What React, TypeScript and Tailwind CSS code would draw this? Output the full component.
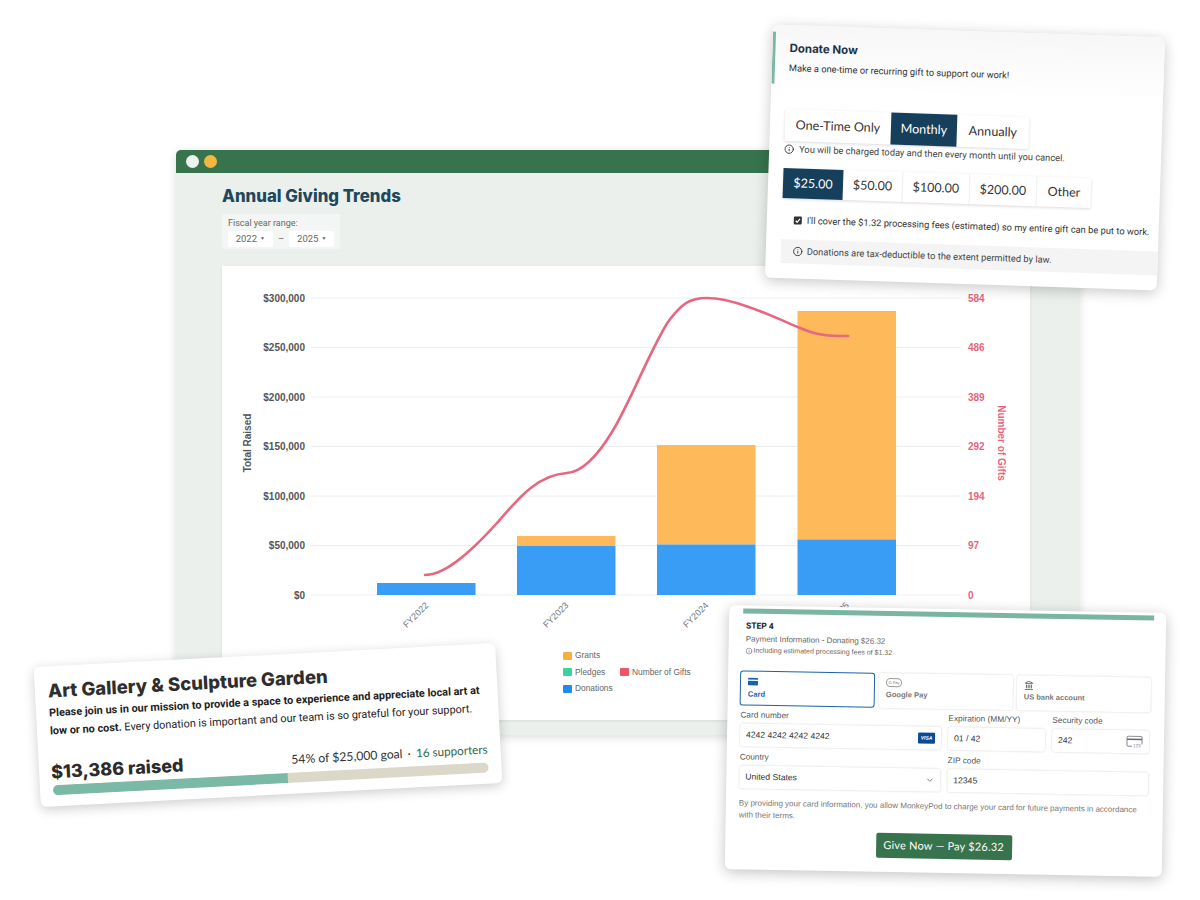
import { ChevronDown, Info, Landmark } from 'lucide-react'

const GRID = [298, 347.5, 397, 446.5, 496, 545.5, 595]
const LEFT_TICKS = ['$300,000', '$250,000', '$200,000', '$150,000', '$100,000', '$50,000', '$0']
const RIGHT_TICKS = ['584', '486', '389', '292', '194', '97', '0']

const BARS = [
  { x: 377, label: 'FY2022', blue: 583, orange: 583 },
  { x: 517, label: 'FY2023', blue: 546, orange: 536 },
  { x: 657, label: 'FY2024', blue: 544.5, orange: 445 },
  { x: 797.5, label: 'FY2025', blue: 539.5, orange: 311 },
]

const GIFTS_LINE =
  'M425 575 C445 575 470 553 497 523 C515 503 535 475 567 473 C582 472 598 455 612 432 ' +
  'C630 403 650 350 668 322 C682 303 690 298 707 298 C735 298 775 317.5 800 328 C820 336.5 832 336 848 336'

function Chart() {
  return (
    <svg width="808" height="374" viewBox="222 266 808 374" className="block" fontFamily="'Liberation Sans', Arial, sans-serif">
      {GRID.map((y, i) => (
        <g key={y}>
          <line x1="311" x2="961" y1={y} y2={y} stroke="#eceeed" strokeWidth="1" />
          <text x="305" y={y + 3.5} textAnchor="end" fontSize="10" fontWeight="700" fill="#555">{LEFT_TICKS[i]}</text>
          <text x="968" y={y + 3.5} fontSize="10" fontWeight="700" fill="#e8647c">{RIGHT_TICKS[i]}</text>
        </g>
      ))}
      <text transform="translate(251 443) rotate(-90)" textAnchor="middle" fontSize="10" fontWeight="700" fill="#555">Total Raised</text>
      <text transform="translate(998 443) rotate(90)" textAnchor="middle" fontSize="10" fontWeight="700" fill="#e8647c">Number of Gifts</text>
      {BARS.map(b => (
        <g key={b.label}>
          <rect x={b.x} y={b.orange} width="98.5" height={b.blue - b.orange} fill="#fdb95a" />
          <rect x={b.x} y={b.blue} width="98.5" height={595 - b.blue} fill="#399df5" />
          <text transform={`translate(${b.x + 52} 606) rotate(-45)`} textAnchor="end" fontSize="9" fill="#777">{b.label}</text>
        </g>
      ))}
      <path d={GIFTS_LINE} fill="none" stroke="#e6677f" strokeWidth="2.6" strokeLinecap="round" />
    </svg>
  )
}

function LegendItem({ color, label }: { color: string; label: string }) {
  return (
    <div className="flex items-center gap-[3px] font-['Liberation_Sans',Arial,sans-serif] text-[8.4px] leading-[9px] text-[#666]">
      <span className={`h-[8px] w-[9px] rounded-[1px] ${color}`} />
      {label}
    </div>
  )
}

function BrowserWindow() {
  return (
    <div className="absolute left-[176px] top-[150px] h-[585px] w-[903px] overflow-hidden rounded-t-[5px] bg-[#ebf0ed] shadow-[0_2px_10px_rgba(0,0,0,0.14)]">
      <div className="flex h-[23px] items-center gap-[5px] bg-[#37734d] pl-[10px]">
        <span className="h-[13px] w-[13px] rounded-full bg-[#edf3ee]" />
        <span className="h-[13px] w-[13px] rounded-full bg-[#f4b73f]" />
      </div>
      <div className="px-[46px]">
        <h1 className="mt-[12px] font-['Inter',sans-serif] text-[16.8px] font-extrabold leading-[22px] text-[#21475c]">Annual Giving Trends</h1>
        <div className="mt-[7px] h-[35px] w-[118px] rounded-[2px] bg-[#f3f6f4] px-[6px] pt-[4px] font-['Roboto',sans-serif] text-[#666]">
          <p className="text-[9px] leading-[11px]">Fiscal year range:</p>
          <div className="mt-[2px] flex items-center text-[9.5px]">
            <span className="flex h-[16px] w-[45px] items-center justify-center gap-[3px] rounded-[2px] bg-white">2022 <span className="text-[5px]">▼</span></span>
            <span className="w-[17px] text-center">–</span>
            <span className="flex h-[16px] w-[45px] items-center justify-center gap-[3px] rounded-[2px] bg-white">2025 <span className="text-[5px]">▼</span></span>
          </div>
        </div>
        <div className="mt-[17px] h-[454px] w-[808px] bg-white shadow-[0_1px_3px_rgba(0,0,0,0.08)]">
          <Chart />
          <div className="ml-[341px] mt-[11px] grid w-[140px] grid-cols-[57px_1fr] gap-y-[7.5px]">
            <LegendItem color="bg-[#f5b041]" label="Grants" />
            <span />
            <LegendItem color="bg-[#3ad29f]" label="Pledges" />
            <LegendItem color="bg-[#f25369]" label="Number of Gifts" />
            <LegendItem color="bg-[#1f8ceb]" label="Donations" />
          </div>
        </div>
      </div>
    </div>
  )
}

function DonateCard() {
  return (
    <div className="absolute left-[769px] top-[31px] h-[253px] w-[392px] rotate-[1.9deg] overflow-hidden rounded-[6px] bg-white font-['Roboto',sans-serif] shadow-[0_3px_14px_rgba(0,0,0,0.22)]">
      <div className="h-[68px] bg-gradient-to-b from-[#f7f7f7] to-white pt-[7px]">
        <div className="h-[52px] border-l-[3px] border-[#7ab8a3] pl-[14px] pt-[8px]">
          <p className="font-['Inter',sans-serif] text-[11.5px] font-bold leading-[16px] text-[#1c3347]">Donate Now</p>
          <p className="mt-[6px] text-[9.3px] leading-[12px] text-[#333]">Make a one-time or recurring gift to support our work!</p>
        </div>
      </div>
      <div className="ml-[15px] mt-[16px] flex h-[32px] w-fit rounded-[2px] font-['Lato',sans-serif] text-[12.6px] text-[#333] shadow-[0_1px_3px_rgba(0,0,0,0.15)]">
        <span className="flex w-[106px] items-center justify-center">One-Time Only</span>
        <span className="flex w-[66px] items-center justify-center bg-[#163f5c] text-white">Monthly</span>
        <span className="flex w-[72px] items-center justify-center">Annually</span>
      </div>
      <p className="ml-[15px] mt-[2px] flex items-center gap-[5px] text-[9.3px] leading-[12px] text-[#444]">
        <Info size={10} strokeWidth={2} className="text-[#222]" />
        You will be charged today and then every month until you cancel.
      </p>
      <div className="ml-[15px] mt-[13px] flex h-[30px] w-fit rounded-[2px] font-['Lato',sans-serif] text-[12.5px] text-[#333] shadow-[0_1px_3px_rgba(0,0,0,0.15)]">
        <span className="flex w-[60px] items-center justify-center bg-[#163f5c] text-white">$25.00</span>
        <span className="flex w-[60px] items-center justify-center border-r border-[#eee]">$50.00</span>
        <span className="flex w-[67px] items-center justify-center border-r border-[#eee]">$100.00</span>
        <span className="flex w-[67px] items-center justify-center border-r border-[#eee]">$200.00</span>
        <span className="flex w-[54px] items-center justify-center">Other</span>
      </div>
      <div className="ml-[27px] mt-[16px] flex items-center gap-[5px] text-[9.3px] leading-[12px] text-[#333]">
        <span className="flex h-[8px] w-[8px] items-center justify-center rounded-[1px] bg-[#333]">
          <svg width="6" height="6" viewBox="0 0 10 10" fill="none" stroke="#fff" strokeWidth="2"><path d="M1.5 5.5 4 8l4.5-6" /></svg>
        </span>
        <span className="whitespace-nowrap">I'll cover the $1.32 processing fees (estimated) so my entire gift can be put to work.</span>
      </div>
      <div className="ml-[15px] mt-[13px] flex h-[24px] items-center gap-[4px] bg-[#f4f4f4] pl-[12px] text-[9.3px] text-[#444]">
        <Info size={10} strokeWidth={2} className="text-[#222]" />
        Donations are tax-deductible to the extent permitted by law.
      </div>
    </div>
  )
}

function CampaignCard() {
  return (
    <div className="absolute left-[37px] top-[655px] h-[140px] w-[462px] -rotate-3 rounded-[6px] bg-white px-[13px] pt-[11px] font-['Roboto',sans-serif] shadow-[0_3px_12px_rgba(0,0,0,0.2)]">
      <h2 className="font-['Inter',sans-serif] text-[18.5px] font-extrabold leading-[26px] text-[#2e2e2e]">Art Gallery &amp; Sculpture Garden</h2>
      <p className="mt-[1px] w-[440px] text-[10.9px] leading-[18px] text-[#222]">
        <strong className="font-bold">Please join us in our mission to provide a space to experience and appreciate local art at low or no cost.</strong>{' '}
        Every donation is important and our team is so grateful for your support.
      </p>
      <div className="mt-[21px] flex items-end justify-between">
        <span className="-ml-[1px] font-['Inter',sans-serif] text-[18px] font-extrabold leading-[22px] text-[#2b2b2b]">$13,386 raised</span>
        <span className="mb-[2px] font-['Lato',sans-serif] text-[12.2px] leading-[18px] text-[#333]">
          54% of $25,000 goal <span className="mx-[2px]">·</span> <span className="text-[11.7px] text-[#2f6848]">16 supporters</span>
        </span>
      </div>
      <div className="mt-[2px] h-[10px] overflow-hidden rounded-full bg-[#dcd8c9]">
        <div className="h-full bg-[#79b9a6]" style={{ width: '54%' }} />
      </div>
    </div>
  )
}

function Field({ label, value, className, children }: { label: string; value: string; className: string; children?: React.ReactNode }) {
  return (
    <div className={className}>
      <p className="text-[8.3px] leading-[11px] text-[#555]">{label}</p>
      <div className="mt-[3px] flex h-[23px] items-center justify-between rounded-[3px] bg-white pl-[6px] pr-[6px] text-[8.6px] text-[#333] shadow-[0_0_2px_rgba(0,0,0,0.2)]">
        {value}
        {children}
      </div>
    </div>
  )
}

function PaymentCard() {
  return (
    <div className="absolute left-[727px] top-[609px] h-[264px] w-[437px] rotate-1 rounded-[6px] bg-white px-[13px] font-['Liberation_Sans',Arial,sans-serif] shadow-[0_3px_14px_rgba(0,0,0,0.24)]">
      <div className="ml-[1px] h-[5px] w-[411px] translate-y-[3px] bg-[#79b5a2]" />
      <p className="mt-[10px] pl-[4px] font-['Roboto',sans-serif] text-[8.5px] font-bold leading-[11px] text-[#222]">STEP 4</p>
      <p className="mt-[2px] pl-[4px] text-[8px] leading-[11px] text-[#666]">Payment Information - Donating $26.32</p>
      <p className="mt-[1px] flex items-center gap-[1px] pl-[4px] text-[7px] leading-[10px] text-[#666]">
        <Info size={7} strokeWidth={2} />
        Including estimated processing fees of $1.32
      </p>
      <div className="-ml-[1px] mt-[15px] flex gap-[4px]">
        <div className="h-[35px] w-[135px] rounded-[3px] border border-[#1a63a8] pl-[7px] pt-[6px] text-[#1a63a8]">
          <svg width="10" height="8" viewBox="0 0 10 8" className="block"><rect width="10" height="8" rx="1" fill="#1a63a8" /><rect y="2" width="10" height="1.2" fill="#fff" /></svg>
          <p className="mt-[4px] text-[7.6px] font-bold leading-[9px]">Card</p>
        </div>
        <div className="h-[35px] w-[134px] rounded-[3px] pl-[7px] pt-[5px] text-[#777] shadow-[0_0_2px_rgba(0,0,0,0.2)]">
          <span className="flex h-[9px] w-[16px] items-center justify-center rounded-full border border-[#999] text-[4px]">G Pay</span>
          <p className="mt-[3px] text-[7.6px] font-bold leading-[10px]">Google Pay</p>
        </div>
        <div className="h-[35px] w-[134px] rounded-[3px] pl-[7px] pt-[5px] text-[#777] shadow-[0_0_2px_rgba(0,0,0,0.2)]">
          <Landmark size={10} className="text-[#555]" />
          <p className="mt-[2px] text-[7.5px] font-bold leading-[10px]">US bank account</p>
        </div>
      </div>
      <div className="mt-[4px] grid grid-cols-[201px_97px_97px] gap-x-[7px] gap-y-[5px]">
        <Field label="Card number" value="4242 4242 4242 4242" className="">
          <span className="flex h-[11px] w-[17px] items-center justify-center rounded-[1px] bg-[#0a4a96] text-[5px] font-bold italic text-white">VISA</span>
        </Field>
        <Field label="Expiration (MM/YY)" value="01 / 42" className="" />
        <Field label="Security code" value="242" className="">
          <svg width="17" height="13" viewBox="0 0 17 13" fill="none" stroke="#666" strokeWidth="0.8">
            <path d="M16 9V2a1 1 0 0 0-1-1H2a1 1 0 0 0-1 1v8a1 1 0 0 0 1 1h4" />
            <path d="M1 4h15" strokeWidth="1.5" />
            <text x="7" y="12" fontSize="4.5" fill="#666" stroke="none">123</text>
          </svg>
        </Field>
        <Field label="Country" value="United States" className="">
          <ChevronDown size={9} className="text-[#555]" />
        </Field>
        <Field label="ZIP code" value="12345" className="col-span-2" />
      </div>
      <p className="mt-[9px] w-[402px] text-[8px] leading-[12px] text-[#777]">
        By providing your card information, you allow MonkeyPod to charge your card for future payments in accordance with their terms.
      </p>
      <div className="mt-[9px] flex justify-center">
        <button className="h-[25px] w-[136px] rounded-[2px] bg-[#37734d] font-['Lato',sans-serif] text-[11px] tracking-[0.2px] text-white">Give Now — Pay $26.32</button>
      </div>
    </div>
  )
}

export default function App() {
  return (
    <div className="relative h-[900px] w-[1200px] overflow-hidden bg-white">
      <BrowserWindow />
      <DonateCard />
      <CampaignCard />
      <PaymentCard />
    </div>
  )
}
